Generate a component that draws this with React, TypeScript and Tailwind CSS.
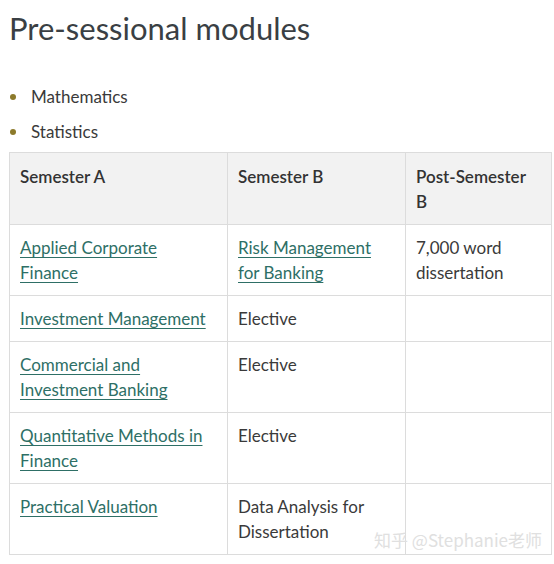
const rows: { a: string; b: string; bLink?: boolean; c: string }[] = [
  { a: "Applied Corporate Finance", b: "Risk Management for Banking", bLink: true, c: "7,000 word dissertation" },
  { a: "Investment Management", b: "Elective", c: "" },
  { a: "Commercial and Investment Banking", b: "Elective", c: "" },
  { a: "Quantitative Methods in Finance", b: "Elective", c: "" },
  { a: "Practical Valuation", b: "Data Analysis for Dissertation", c: "" },
];

function Link({ children }: { children: React.ReactNode }) {
  return (
    <a href="#" className="text-[#2e6f66] underline underline-offset-[3px] decoration-1">
      {children}
    </a>
  );
}

const th = "border border-[#dcdcdc] text-left align-top font-semibold px-[10px] pt-[11px] pb-[10px] text-[#333]";
const td = "border border-[#dcdcdc] align-top px-[10px] pt-[10px] pb-[10px]";

export default function App() {
  return (
    <div className="relative w-[554px] h-[564px] bg-white text-[#3a3a3a] font-['Lato','Liberation_Sans',sans-serif] overflow-hidden">
      <h1 className="pl-[9px] pt-[9px] text-[31px] leading-[38px] text-[#3a3f44]">Pre-sessional modules</h1>

      <ul className="mt-[37px] pl-[10px] flex flex-col gap-[10px] text-[17px] leading-[25px]">
        {["Mathematics", "Statistics"].map((item) => (
          <li key={item} className="flex items-center">
            <span className="w-[6px] h-[6px] rounded-full bg-[#8c7a2b] mr-[15px]" />
            {item}
          </li>
        ))}
      </ul>

      <table className="ml-[9px] mt-[8px] w-[542px] border-collapse text-[17px] leading-[25px] table-fixed">
        <colgroup>
          <col className="w-[218px]" />
          <col className="w-[178px]" />
          <col className="w-[146px]" />
        </colgroup>
        <thead>
          <tr className="bg-[#f2f2f2]">
            <th className={th}>Semester A</th>
            <th className={th}>Semester B</th>
            <th className={th}>
              Post-Semester
              <br />B
            </th>
          </tr>
        </thead>
        <tbody>
          {rows.map((r) => (
            <tr key={r.a}>
              <td className={td}>
                <Link>{r.a}</Link>
              </td>
              <td className={td}>{r.bLink ? <Link>{r.b}</Link> : r.b}</td>
              <td className={td}>{r.c}</td>
            </tr>
          ))}
        </tbody>
      </table>

      <div className="absolute left-[374px] top-[528px] text-[17px] leading-[24px] text-[#e0e0e0] font-['Noto_Sans_CJK_SC',sans-serif]">
        知乎 @Stephanie老师
      </div>
    </div>
  );
}
